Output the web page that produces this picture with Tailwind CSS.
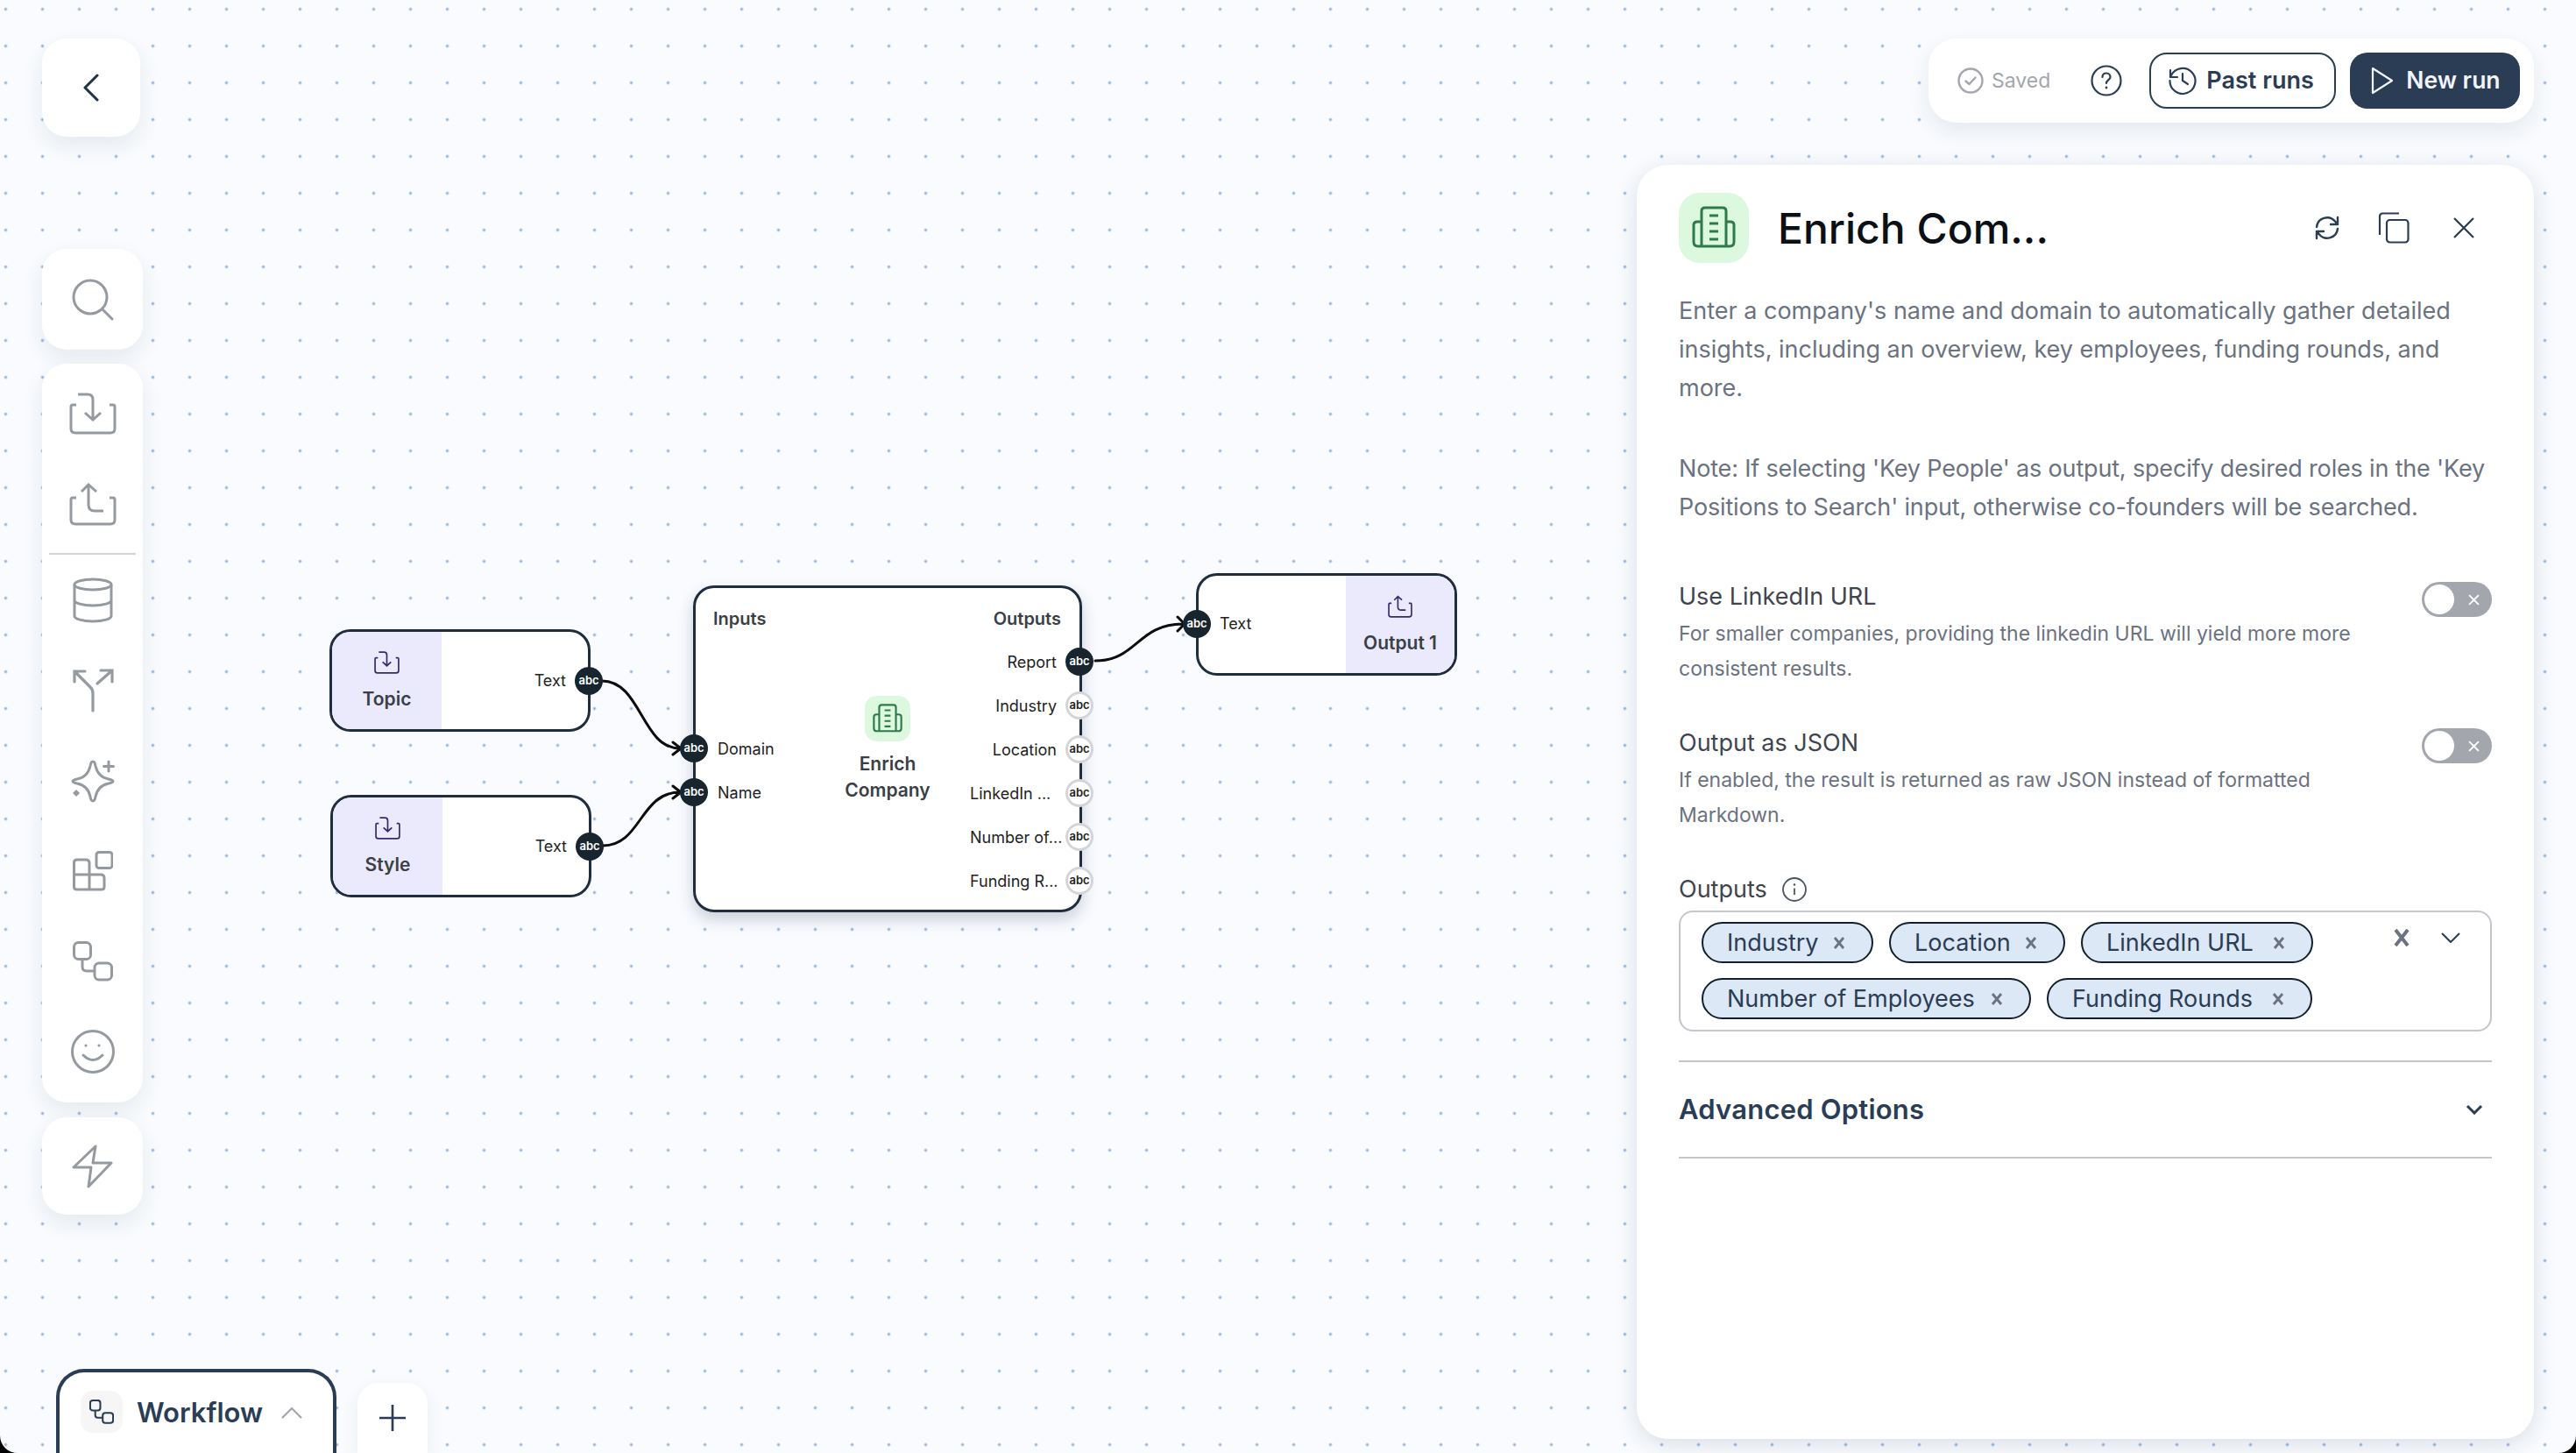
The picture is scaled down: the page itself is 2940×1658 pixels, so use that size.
<!DOCTYPE html>
<html lang="en">
<head>
  <meta charset="UTF-8" />
  <meta name="viewport" content="width=device-width, initial-scale=1" />
  <title>Enrich Company Workflow</title>
  <script src="https://cdn.jsdelivr.net/npm/@tailwindcss/browser@4"></script>
</head>
<body class="bg-black font-[Inter,sans-serif]">
  <!-- shared icons -->
  <svg class="hidden" xmlns="http://www.w3.org/2000/svg">
    <symbol id="tray-in" viewBox="0 0 54 48">
      <path d="M8 14H4Q2 14 2 16V41Q2 46 7 46H47Q52 46 52 41V16Q52 14 50 14H46M10 2H21Q27 2 27 8V30M18 23L27 31L36 23" />
    </symbol>
    <symbol id="tray-out" viewBox="0 0 54 50">
      <path d="M8 18H4Q2 18 2 20V43Q2 48 7 48H47Q52 48 52 43V20Q52 18 50 18H46M22 3V26Q22 33 29 33H39M14 11L22 3L31 11" />
    </symbol>
    <symbol id="flow" viewBox="0 0 46 46">
      <rect x="1.5" y="1.5" width="19" height="19" rx="5" />
      <rect x="25" y="25" width="19.5" height="19" rx="5" />
      <path d="M11 21V29Q11 34 16 34H25" />
    </symbol>
    <symbol id="building" viewBox="0 0 50 50">
      <path d="M11 46V6Q11 2 15 2H35Q39 2 39 6V46M11 18H6Q2 18 2 22V41Q2 46 7 46H43Q48 46 48 41V22Q48 18 44 18H39M20 11H30M20 20H30M20 29H30M20 38H30" />
    </symbol>
  </svg>

  <div class="relative w-[2940px] h-[1658px] overflow-hidden rounded-b-[20px] bg-[#f9fbfe] bg-[radial-gradient(circle,#8db0da_1.2px,transparent_2px)] bg-[length:42px_42px] bg-[position:-14.5px_-10.5px]">

    <!-- left rail -->
    <div class="absolute left-12 top-11 flex flex-col items-start">
      <button class="flex h-28 w-28 items-center justify-center rounded-[28px] bg-white shadow-[0_10px_24px_rgba(30,50,80,0.09)]">
        <svg class="h-[32px] w-[18px]" viewBox="0 0 18 32" fill="none" stroke="#1f3247" stroke-width="3" stroke-linecap="round" stroke-linejoin="round"><path d="M16 2L2 16L16 30" /></svg>
      </button>
      <button class="mt-32 flex h-[115px] w-[115px] items-center justify-center rounded-[28px] bg-white shadow-[0_10px_24px_rgba(30,50,80,0.09)]">
        <svg class="h-12 w-12" viewBox="0 0 48 48" fill="none" stroke="#959aa0" stroke-width="3" stroke-linecap="round"><circle cx="21" cy="21" r="19" /><path d="M35 35L46 46" /></svg>
      </button>
      <div class="mt-4 flex w-[115px] flex-col items-center rounded-[28px] bg-white pt-[5px] pb-[7px] shadow-[0_10px_24px_rgba(30,50,80,0.09)]">
        <div class="flex h-[103px] items-center"><svg class="h-[48px] w-[54px] fill-none stroke-[#959aa0] stroke-[3px]"><use href="#tray-in" /></svg></div>
        <div class="flex h-[103px] items-center"><svg class="h-[50px] w-[54px] fill-none stroke-[#959aa0] stroke-[3px]"><use href="#tray-out" /></svg></div>
        <div class="mt-[5px] h-[2px] w-[99px] bg-[#d2d3d5]"></div>
        <div class="flex h-[103px] items-center">
          <svg class="h-[52px] w-[48px]" viewBox="0 0 48 52" fill="none" stroke="#959aa0" stroke-width="3"><ellipse cx="24" cy="8" rx="21" ry="6" /><path d="M3 8V44C3 47 12 50 24 50S45 47 45 44V8M3 26C3 29 12 32 24 32S45 29 45 26" /></svg>
        </div>
        <div class="flex h-[103px] items-center">
          <svg class="h-[50px] w-[48px]" viewBox="0 0 48 50" fill="none" stroke="#959aa0" stroke-width="3.2" stroke-linecap="round"><path d="M24 48V28Q24 24 21 21L3 3M3 15V3H15M29 17L46 2M33 2H46V15" /></svg>
        </div>
        <div class="flex h-[103px] items-center">
          <svg class="h-[50px] w-[50px]" viewBox="0 0 50 50" fill="none" stroke="#959aa0" stroke-width="3" stroke-linecap="round"><path d="M25 3C27 3 27.5 5 28 8C29.5 15 33 21 43 23C47 24 48 24.5 48 25.5C48 26.5 47 27 43 28C33 30 29.5 36 28 43C27.5 46 27 48 25 48C23 48 22.5 46 22 43C20.5 36 17 30 7 28C3 27 2 26.5 2 25.5C2 24.5 3 24 7 23C17 21 20.5 15 22 8C22.5 5 23 3 25 3Z" /><path d="M43 3V14M37.500 8.500H48.500" /><path d="M6 35L10 39L6 43L2 39Z" fill="#959aa0" stroke="none" /></svg>
        </div>
        <div class="flex h-[103px] items-center">
          <svg class="h-[46px] w-[46px]" viewBox="0 0 46 46" fill="none" stroke="#959aa0" stroke-width="3"><path d="M1.500 13Q1.500 10 5 10H15Q19 10 19 14V27H32Q36 27 36 31V41Q36 44 33 44H5Q1.500 44 1.500 41ZM1.500 27H19M19 27V44" /><rect x="27" y="1.500" width="18" height="18" rx="3" /></svg>
        </div>
        <div class="flex h-[103px] items-center"><svg class="h-[46px] w-[46px] fill-none stroke-[#959aa0] stroke-[3px]"><use href="#flow" /></svg></div>
        <div class="flex h-[103px] items-center">
          <svg class="h-[50px] w-[50px]" viewBox="0 0 50 50" fill="none" stroke="#959aa0" stroke-width="3" stroke-linecap="round"><circle cx="25" cy="25" r="23.500" /><path d="M14 29Q25 40 36 29" /><circle cx="17" cy="18" r="1.600" fill="#959aa0" stroke="none" /><circle cx="32" cy="18" r="1.600" fill="#959aa0" stroke="none" /></svg>
        </div>
      </div>
      <button class="mt-[17px] flex h-[111px] w-[115px] items-center justify-center rounded-[28px] bg-white shadow-[0_10px_24px_rgba(30,50,80,0.09)]">
        <svg class="h-[50px] w-[47px]" viewBox="0 0 47 50" fill="none" stroke="#959aa0" stroke-width="3" stroke-linejoin="round"><path d="M27 2L2 26H22L19 48L45 21H24Z" /></svg>
      </button>
    </div>

    <!-- workflow tabs -->
    <div class="absolute bottom-0 left-16 flex h-[96px] w-[320px] items-start rounded-t-[32px] border-4 border-b-0 border-[#2a3d55] bg-white pt-[21px] pl-6">
      <div class="flex h-12 w-12 items-center justify-center rounded-[14px] bg-[#f6f6f6]"><svg class="h-[28px] w-[28px] fill-none stroke-[#2a3d55] stroke-[3.4px]"><use href="#flow" /></svg></div>
      <span class="ml-4 text-[31px] leading-[50px] font-semibold text-[#2a3d55]">Workflow</span>
      <svg class="mt-[18px] ml-[21px] h-[14px] w-[24px]" viewBox="0 0 24 14" fill="none" stroke="#a3a6ad" stroke-width="2.200"><path d="M1 13L12 2L23 13" /></svg>
    </div>
    <button class="absolute bottom-0 left-[408px] flex h-20 w-20 items-start justify-center rounded-t-[24px] bg-white pt-[25px] shadow-[0_6px_20px_rgba(30,50,80,0.07)]">
      <svg class="h-[30px] w-[30px]" viewBox="0 0 30 30" fill="none" stroke="#2a3d55" stroke-width="2.600"><path d="M15 0V30M0 15H30" /></svg>
    </button>

    <!-- edges -->
    <svg class="absolute inset-0 h-[1658px] w-[2940px]" viewBox="0 0 2940 1658" fill="none" stroke="#0d0d0d" stroke-width="3" stroke-linecap="round" stroke-linejoin="round">
      <path d="M687 777C732 777 732 854 776 854M768 847L777 854L768 861" />
      <path d="M688 965C732 965 730 904 776 904M768 897L777 904L768 911" />
      <path d="M1250 754C1298 754 1298 712 1350 712M1344 704L1352 712L1344 720" />
    </svg>

    <!-- Topic -->
    <div class="absolute left-[376px] top-[718px] flex h-[117px] w-[298px] rounded-[24px] border-[3px] border-[#1f2d3c] bg-white">
      <div class="flex w-[125px] flex-col items-center rounded-l-[21px] bg-[#ebe9fc] pt-[22px]">
        <svg class="h-[26px] w-[29px] fill-none stroke-[#3b2a6b] stroke-[3.2px]"><use href="#tray-in" /></svg>
        <span class="mt-[14px] text-[21px] leading-[30px] font-semibold text-[#3a3f47]">Topic</span>
      </div>
      <div class="flex flex-1 items-center justify-end gap-[10px] -mr-[17px]">
        <span class="text-[18px] text-[#222]">Text</span>
        <span class="flex h-8 w-8 items-center justify-center rounded-full bg-[#18252f] text-[13px] font-semibold text-white">abc</span>
      </div>
    </div>

    <!-- Style -->
    <div class="absolute left-[377px] top-[907px] flex h-[117px] w-[298px] rounded-[24px] border-[3px] border-[#1f2d3c] bg-white">
      <div class="flex w-[125px] flex-col items-center rounded-l-[21px] bg-[#ebe9fc] pt-[22px]">
        <svg class="h-[26px] w-[29px] fill-none stroke-[#3b2a6b] stroke-[3.2px]"><use href="#tray-in" /></svg>
        <span class="mt-[14px] text-[21px] leading-[30px] font-semibold text-[#3a3f47]">Style</span>
      </div>
      <div class="flex flex-1 items-center justify-end gap-[10px] -mr-[17px]">
        <span class="text-[18px] text-[#222]">Text</span>
        <span class="flex h-8 w-8 items-center justify-center rounded-full bg-[#18252f] text-[13px] font-semibold text-white">abc</span>
      </div>
    </div>

    <!-- Enrich Company -->
    <div class="absolute left-[791px] top-[668px] grid h-[373px] w-[444px] grid-cols-3 rounded-[24px] border-[3px] border-[#1f2d3c] bg-white pt-[21px] shadow-[0_8px_18px_rgba(30,50,80,0.22)]">
      <div class="flex flex-col items-start -ml-[18px]">
        <span class="ml-[38px] h-7 text-[20px] leading-[28px] font-semibold text-[#3a3f47]">Inputs</span>
        <div class="mt-[109px] flex h-[50px] items-center gap-[11px]">
          <span class="flex h-8 w-8 items-center justify-center rounded-full bg-[#18252f] text-[13px] font-semibold text-white">abc</span>
          <span class="text-[18px] text-[#222]">Domain</span>
        </div>
        <div class="flex h-[50px] items-center gap-[11px]">
          <span class="flex h-8 w-8 items-center justify-center rounded-full bg-[#18252f] text-[13px] font-semibold text-white">abc</span>
          <span class="text-[18px] text-[#222]">Name</span>
        </div>
      </div>
      <div class="flex flex-col items-center pt-[102px]">
        <div class="flex h-[52px] w-[52px] items-center justify-center rounded-[14px] bg-[#dcf9e0]">
          <svg class="h-[34px] w-[34px] fill-none stroke-[#2f7a4b] stroke-[3.2px]"><use href="#building" /></svg>
        </div>
        <span class="mt-[11px] text-center text-[21px] leading-[30px] font-semibold text-[#3a3f47]">Enrich<br />Company</span>
      </div>
      <div class="flex flex-col items-end -mr-[16px]">
        <span class="mr-[37px] h-7 text-[20px] leading-[28px] font-semibold text-[#3a3f47]">Outputs</span>
        <div class="mt-[10px] flex h-[50px] items-center gap-[10px]">
          <span class="text-[18px] text-[#222]">Report</span>
          <span class="flex h-8 w-8 items-center justify-center rounded-full bg-[#18252f] text-[13px] font-semibold text-white">abc</span>
        </div>
        <div class="flex h-[50px] items-center gap-[10px]">
          <span class="text-[18px] text-[#222]">Industry</span>
          <span class="flex h-8 w-8 items-center justify-center rounded-full border-[3px] border-[#d4d5d8] bg-white text-[13px] font-semibold text-[#222]">abc</span>
        </div>
        <div class="flex h-[50px] items-center gap-[10px]">
          <span class="text-[18px] text-[#222]">Location</span>
          <span class="flex h-8 w-8 items-center justify-center rounded-full border-[3px] border-[#d4d5d8] bg-white text-[13px] font-semibold text-[#222]">abc</span>
        </div>
        <div class="flex h-[50px] items-center gap-[10px]">
          <span class="w-[99px] text-[18px] text-[#222]">LinkedIn ...</span>
          <span class="flex h-8 w-8 items-center justify-center rounded-full border-[3px] border-[#d4d5d8] bg-white text-[13px] font-semibold text-[#222]">abc</span>
        </div>
        <div class="flex h-[50px] items-center gap-[10px]">
          <span class="w-[99px] text-[18px] whitespace-nowrap text-[#222]">Number of...</span>
          <span class="flex h-8 w-8 items-center justify-center rounded-full border-[3px] border-[#d4d5d8] bg-white text-[13px] font-semibold text-[#222]">abc</span>
        </div>
        <div class="flex h-[50px] items-center gap-[10px]">
          <span class="w-[99px] text-[18px] whitespace-nowrap text-[#222]">Funding R...</span>
          <span class="flex h-8 w-8 items-center justify-center rounded-full border-[3px] border-[#d4d5d8] bg-white text-[13px] font-semibold text-[#222]">abc</span>
        </div>
      </div>
    </div>

    <!-- Output 1 -->
    <div class="absolute left-[1365px] top-[654px] flex h-[117px] w-[298px] rounded-[24px] border-[3px] border-[#1f2d3c] bg-white">
      <div class="flex flex-1 items-start gap-[10px] -ml-[18px] pt-[39px]">
        <span class="flex h-8 w-8 items-center justify-center rounded-full bg-[#18252f] text-[13px] font-semibold text-white">abc</span>
        <span class="text-[18px] leading-[32px] text-[#222]">Text</span>
      </div>
      <div class="flex w-[124px] flex-col items-center rounded-r-[21px] bg-[#ebe9fc] pt-[22px]">
        <svg class="h-[26px] w-[28px] fill-none stroke-[#3b2a6b] stroke-[3.2px]"><use href="#tray-out" /></svg>
        <span class="mt-[14px] text-[21px] leading-[30px] font-semibold text-[#3a3f47]">Output 1</span>
      </div>
    </div>

    <!-- top bar -->
    <div class="absolute right-12 top-11 flex h-24 w-[691px] items-center rounded-[32px] bg-white pl-[33px] shadow-[0_10px_24px_rgba(30,50,80,0.09)]">
      <svg class="h-[30px] w-[30px]" viewBox="0 0 30 30" fill="none" stroke="#a3a6ad" stroke-width="2.400" stroke-linecap="round" stroke-linejoin="round"><circle cx="15" cy="15" r="13.500" /><path d="M9.500 15.500L13.500 19L20.500 11.500" /></svg>
      <span class="ml-[9px] text-[23px] text-[#a3a6ad]">Saved</span>
      <svg class="ml-[46px] h-9 w-9" viewBox="0 0 36 36" fill="none" stroke="#2a3d55" stroke-width="2.200" stroke-linecap="round"><circle cx="18" cy="18" r="16.500" /><path d="M13.500 14C13.500 11 15.500 9.500 18 9.500S22.500 11.500 22.500 14C22.500 17 18 17.500 18 21" /><circle cx="18" cy="26" r="1.400" fill="#2a3d55" stroke="none" /></svg>
      <button class="ml-[31px] flex h-16 w-[213px] items-center rounded-[20px] border-[2.500px] border-[#2a3d55] pl-[20px]">
        <svg class="h-[32px] w-[32px]" viewBox="0 0 32 32" fill="none" stroke="#2a3d55" stroke-width="2.200" stroke-linecap="round" stroke-linejoin="round"><path d="M2 4V12H10M3 10A14.500 14.500 0 1 1 1.500 16" /><path d="M16 8V16L22 20" /></svg>
        <span class="ml-[11px] text-[27px] font-semibold text-[#2a3d55]">Past runs</span>
      </button>
      <button class="ml-4 flex h-16 w-[194px] items-center rounded-[20px] bg-[#2a3d55] pl-[24px]">
        <svg class="h-[32px] w-[26px]" viewBox="0 0 26 32" fill="none" stroke="#f1f4f9" stroke-width="2.200" stroke-linejoin="round"><path d="M2 2L24 16L2 30Z" /></svg>
        <span class="ml-[14px] text-[26.500px] font-semibold text-[#f1f4f9]">New run</span>
      </button>
    </div>

    <!-- settings panel -->
    <div class="absolute left-[1868px] top-[188px] bottom-4 right-12 rounded-[36px] bg-white px-12 pt-8 shadow-[0_6px_26px_rgba(30,50,80,0.14)]">
      <div class="flex h-20 items-center">
        <div class="flex h-20 w-20 items-center justify-center rounded-[24px] bg-[#dcf9e0]">
          <svg class="h-[50px] w-[50px] fill-none stroke-[#2f7a4b] stroke-[3px]"><use href="#building" /></svg>
        </div>
        <span class="ml-[33px] pt-[2px] text-[48px] font-[450] text-[#0a1016]">Enrich Com...</span>
        <svg class="ml-auto h-7 w-7" viewBox="0 0 28 28" fill="none" stroke="#2a3d55" stroke-width="2.400" stroke-linecap="round" stroke-linejoin="round"><path d="M2 13A12 12 0 0 1 23 6.500L26 10M26 2V10H18M26 15A12 12 0 0 1 5 21.500L2 18M2 26V18H10" /></svg>
        <svg class="ml-[44px] h-9 w-9" viewBox="0 0 36 36" fill="none" stroke="#2a3d55" stroke-width="2.200" stroke-linejoin="round"><path d="M2 26V5Q2 1.500 5.500 1.500H24" /><rect x="10" y="9" width="24.500" height="25.500" rx="3.500" /></svg>
        <svg class="mr-5 ml-[50px] h-6 w-6" viewBox="0 0 24 24" fill="none" stroke="#2a3d55" stroke-width="2.200"><path d="M1 1L23 23M23 1L1 23" /></svg>
      </div>

      <p class="mt-[33px] text-[27px] leading-[44px] text-[#6b7280]">Enter a company's name and domain to automatically gather detailed insights, including an overview, key employees, funding rounds, and more.</p>
      <p class="mt-12 w-[945px] text-[27px] leading-[44px] tracking-[-0.17px] text-[#6b7280]">Note: If selecting 'Key People' as output, specify desired roles in the 'Key Positions to Search' input, otherwise co-founders will be searched.</p>

      <div class="mt-[62px] flex items-start">
        <div class="w-[810px]">
          <div class="h-10 text-[27px] leading-[36px] text-[#3f4550]">Use LinkedIn URL</div>
          <p class="text-[23px] leading-[40px] text-[#6b7280]">For smaller companies, providing the linkedin URL will yield more more consistent results.</p>
        </div>
        <div class="mt-px ml-auto flex h-10 w-20 items-center rounded-full bg-[#a3a6ad] px-[3px]">
          <span class="h-[34px] w-[34px] rounded-full bg-white"></span>
          <svg class="ml-[16px] h-[13px] w-[13px]" viewBox="0 0 12 12" fill="none" stroke="#fff" stroke-width="1.800"><path d="M1 1L11 11M11 1L1 11" /></svg>
        </div>
      </div>

      <div class="mt-[47px] flex items-start">
        <div class="w-[810px]">
          <div class="h-10 text-[27px] leading-[36px] text-[#3f4550]">Output as JSON</div>
          <p class="text-[23px] leading-[40px] text-[#6b7280]">If enabled, the result is returned as raw JSON instead of formatted Markdown.</p>
        </div>
        <div class="mt-px ml-auto flex h-10 w-20 items-center rounded-full bg-[#a3a6ad] px-[3px]">
          <span class="h-[34px] w-[34px] rounded-full bg-white"></span>
          <svg class="ml-[16px] h-[13px] w-[13px]" viewBox="0 0 12 12" fill="none" stroke="#fff" stroke-width="1.800"><path d="M1 1L11 11M11 1L1 11" /></svg>
        </div>
      </div>

      <div class="mt-[47px] flex h-9 items-center text-[27px] text-[#3f4550]">
        Outputs
        <svg class="ml-[17px] h-7 w-7" viewBox="0 0 28 28" fill="none" stroke="#4b5563" stroke-width="1.800"><circle cx="14" cy="14" r="13" /><path d="M14 12.500V20" /><circle cx="14" cy="8.500" r="1.200" fill="#4b5563" stroke="none" /></svg>
      </div>

      <div class="mt-[6px] flex h-[138px] rounded-[16px] border-2 border-[#c4c6cc] pt-[11px] pl-[24px]">
        <div class="flex w-[720px] flex-wrap content-start gap-x-[18px] gap-y-[17px]">
          <span class="flex h-[47px] w-[196px] items-center justify-between rounded-full border-2 border-[#12202c] bg-[#dce8f5] pt-px pr-[30px] pl-[27px] text-[27px] text-[#2a3d55]">Industry<svg class="h-[14px] w-[14px]" viewBox="0 0 14 14" fill="none" stroke="#6b7280" stroke-width="2.800"><path d="M2 1L12 13M12 1L2 13" /></svg></span>
          <span class="flex h-[47px] w-[201px] items-center justify-between rounded-full border-2 border-[#12202c] bg-[#dce8f5] pt-px pr-[30px] pl-[27px] text-[27px] text-[#2a3d55]">Location<svg class="h-[14px] w-[14px]" viewBox="0 0 14 14" fill="none" stroke="#6b7280" stroke-width="2.800"><path d="M2 1L12 13M12 1L2 13" /></svg></span>
          <span class="flex h-[47px] w-[265px] items-center justify-between rounded-full border-2 border-[#12202c] bg-[#dce8f5] pt-px pr-[30px] pl-[27px] text-[27px] text-[#2a3d55]">LinkedIn URL<svg class="h-[14px] w-[14px]" viewBox="0 0 14 14" fill="none" stroke="#6b7280" stroke-width="2.800"><path d="M2 1L12 13M12 1L2 13" /></svg></span>
          <span class="flex h-[47px] w-[376px] items-center justify-between rounded-full border-2 border-[#12202c] bg-[#dce8f5] pt-px pr-[30px] pl-[27px] text-[27px] text-[#2a3d55]">Number of Employees<svg class="h-[14px] w-[14px]" viewBox="0 0 14 14" fill="none" stroke="#6b7280" stroke-width="2.800"><path d="M2 1L12 13M12 1L2 13" /></svg></span>
          <span class="flex h-[47px] w-[303px] items-center justify-between rounded-full border-2 border-[#12202c] bg-[#dce8f5] pt-px pr-[30px] pl-[27px] text-[27px] text-[#2a3d55]">Funding Rounds<svg class="h-[14px] w-[14px]" viewBox="0 0 14 14" fill="none" stroke="#6b7280" stroke-width="2.800"><path d="M2 1L12 13M12 1L2 13" /></svg></span>
        </div>
        <svg class="mt-[8px] ml-[70px] h-5 w-[18px]" viewBox="0 0 18 20" fill="none" stroke="#6b7280" stroke-width="4"><path d="M2 1L16 19M16 1L2 19" /></svg>
        <svg class="mt-[12px] ml-[36px] h-[12px] w-[22px]" viewBox="0 0 22 12" fill="none" stroke="#2a3d55" stroke-width="2"><path d="M1 1L11 11L21 1" /></svg>
      </div>

      <div class="mt-[33px] flex h-[112px] items-center justify-between border-y-2 border-[#c4c6cc] pr-[10px]">
        <span class="text-[31px] font-semibold tracking-[0.2px] text-[#2a3d55]">Advanced Options</span>
        <svg class="h-3 w-5" viewBox="0 0 20 12" fill="none" stroke="#2a3d55" stroke-width="3"><path d="M2 2L10 10L18 2" /></svg>
      </div>
    </div>
  </div>
</body>
</html>
